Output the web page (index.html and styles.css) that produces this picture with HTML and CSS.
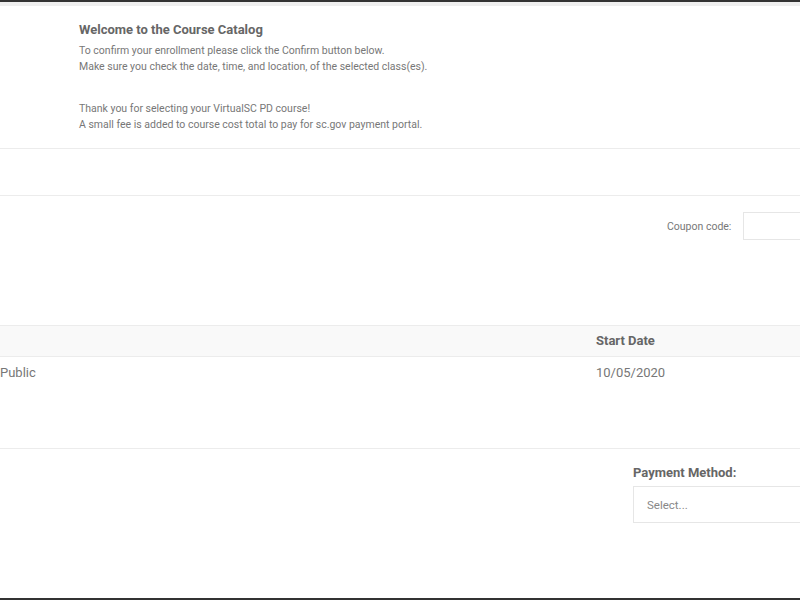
FILE: index.html
```html
<!DOCTYPE html>
<html>
<head>
<meta charset="utf-8">
<link rel="stylesheet" href="styles.css">
</head>
<body>
<div class="page">
  <div class="topband"></div>
  <section class="welcome">
    <h1 class="title">Welcome to the Course Catalog</h1>
    <p class="msg">To confirm your enrollment please click the Confirm button below.<br>Make sure you check the date, time, and location, of the selected class(es).</p>
    <p class="msg second">Thank you for selecting your VirtualSC PD course!<br>A small fee is added to course cost total to pay for sc.gov payment portal.</p>
  </section>
  <section class="blank"></section>
  <section class="coupon">
    <label class="coupon-label">Coupon code:</label>
    <input class="coupon-input" type="text">
  </section>
  <div class="table">
    <div class="thead">
      <div class="cell first"></div>
      <div class="cell">Start Date</div>
    </div>
    <div class="trow">
      <div class="cell first">Public</div>
      <div class="cell">10/05/2020</div>
    </div>
  </div>
  <section class="payment">
    <div class="pay-label">Payment Method:</div>
    <div class="pay-select">Select...</div>
  </section>
</div>
</body>
</html>
```
FILE: styles.css
```css
html, body {
  margin: 0;
  padding: 0;
  overflow: hidden;
  background: #fff;
}
body {
  font-family: Roboto, "Liberation Sans", sans-serif;
  color: #777;
}
.page {
  width: 800px;
  height: 600px;
  box-sizing: border-box;
  border-top: 2px solid #333;
  border-bottom: 2px solid #333;
  overflow: hidden;
}
.topband {
  height: 4px;
  background: #efefef;
}
.welcome {
  padding: 15px 0 15px 79px;
  border-bottom: 1px solid #ececec;
}
.title {
  margin: 0 0 5px;
  font-size: 13px;
  line-height: 17px;
  font-weight: 700;
  color: #666;
}
.msg {
  margin: 0;
  font-size: 10.5px;
  line-height: 16px;
  color: #777;
}
.msg.second {
  margin-top: 26px;
}
.blank {
  height: 46px;
  border-bottom: 1px solid #ececec;
}
.coupon {
  display: flex;
  align-items: center;
  padding: 16px 0 0 667px;
  height: 28px;
  gap: 12px;
}
.coupon-label {
  font-size: 10.5px;
  color: #777;
  white-space: nowrap;
}
.coupon-input {
  flex: none;
  width: 120px;
  height: 28px;
  box-sizing: border-box;
  border: 1px solid #e6e6e6;
  margin: 0;
}
.table {
  margin-top: 85px;
}
.thead, .trow {
  display: grid;
  grid-template-columns: 596px 1fr;
}
.thead {
  height: 28px;
  padding-bottom: 2px;
  background: #f9f9f9;
  border-top: 1px solid #ececec;
  border-bottom: 1px solid #ececec;
  align-items: center;
  font-size: 13px;
  font-weight: 700;
  color: #666;
}
.trow {
  height: 92px;
  border-bottom: 1px solid #ececec;
  font-size: 13px;
  color: #777;
  padding-top: 7px;
  box-sizing: border-box;
  line-height: 17px;
}
.payment {
  padding: 15px 0 0 633px;
}
.pay-label {
  font-size: 13px;
  line-height: 17px;
  font-weight: 700;
  color: #666;
}
.pay-select {
  margin-top: 5px;
  width: 200px;
  height: 37px;
  box-sizing: border-box;
  border: 1px solid #e6e6e6;
  padding-left: 13px;
  display: flex;
  align-items: center;
  font-size: 11.5px;
  color: #888;
}
```
